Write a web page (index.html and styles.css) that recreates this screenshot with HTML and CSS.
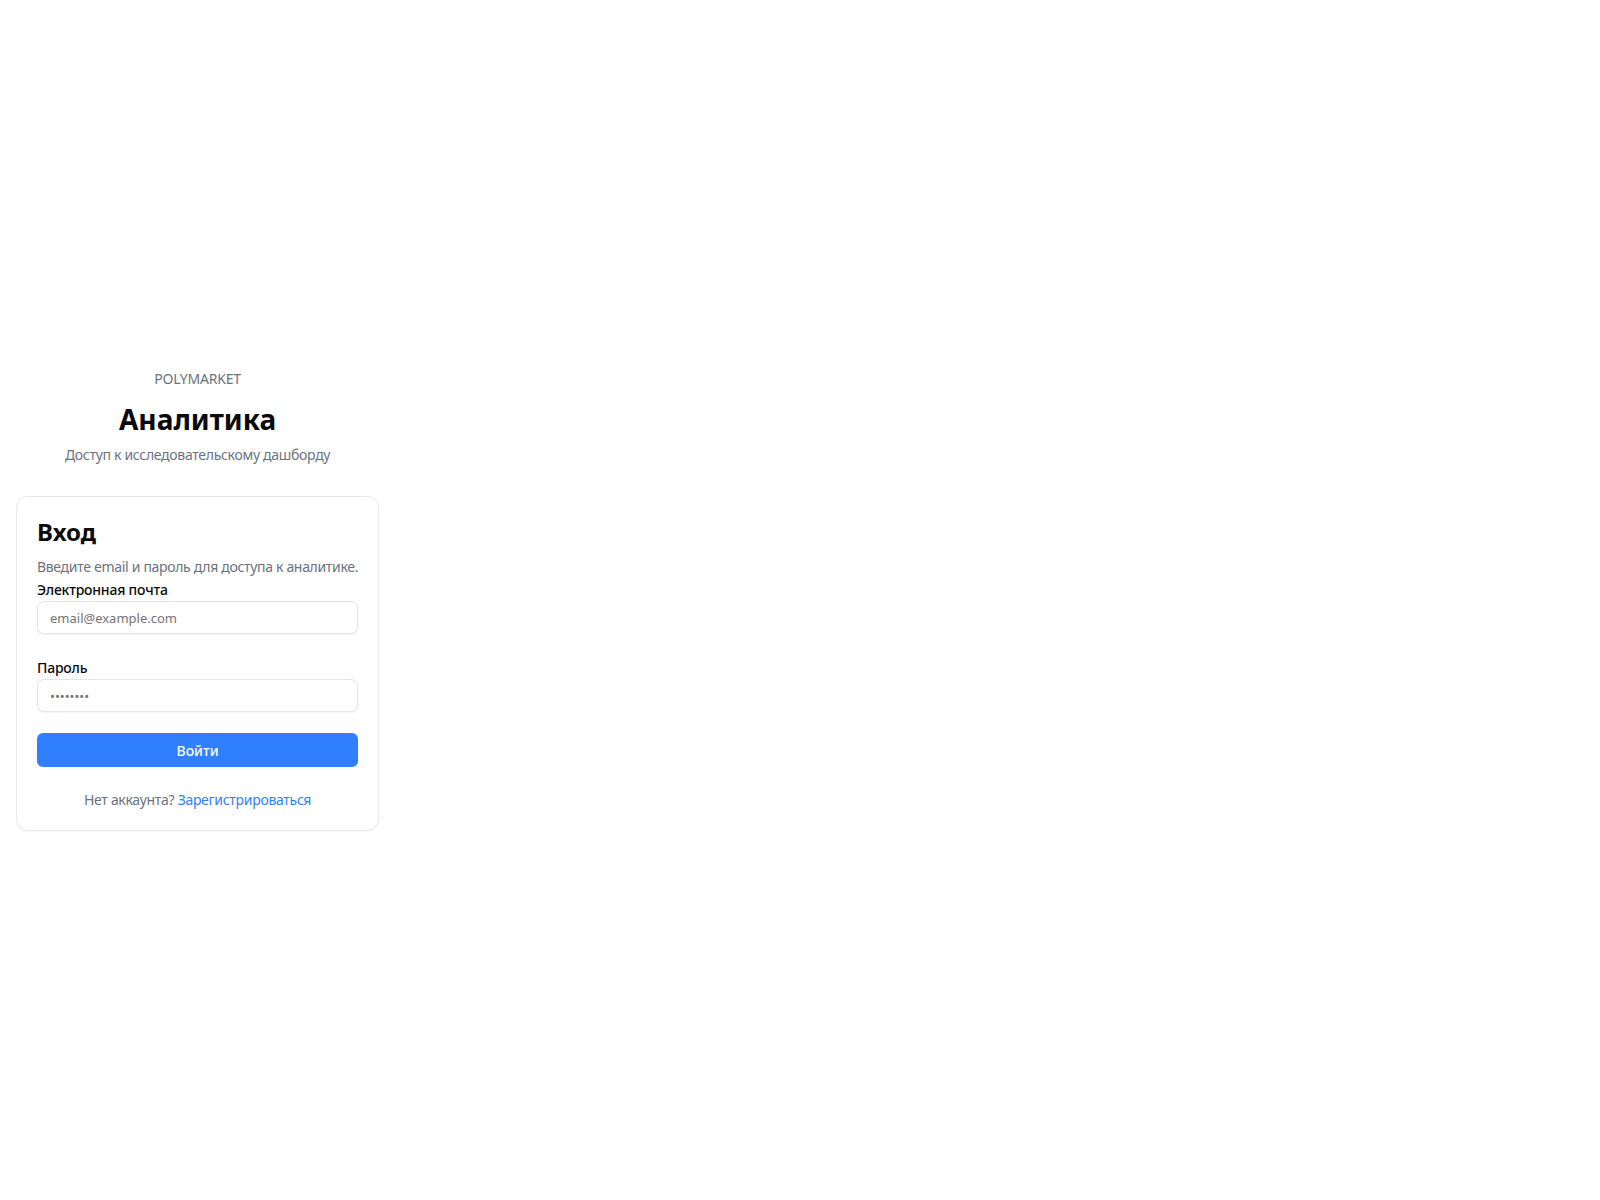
FILE: index.html
```html
<!DOCTYPE html>
<html lang="ru">
<head>
<meta charset="utf-8">
<title>Вход — Аналитика</title>
<link rel="stylesheet" href="styles.css">
</head>
<body>
<main class="page">
  <div class="wrap">
    <header class="head">
      <div class="brand">POLYMARKET</div>
      <h1 class="title">Аналитика</h1>
      <p class="subtitle">Доступ к исследовательскому дашборду</p>
    </header>
    <section class="card">
      <h2 class="card-title">Вход</h2>
      <p class="card-desc">Введите email и пароль для доступа к аналитике.</p>
      <form class="form">
        <div class="field">
          <label class="label" for="email">Электронная почта</label>
          <input class="input" id="email" type="email" placeholder="email@example.com">
        </div>
        <div class="field field-second">
          <label class="label" for="password">Пароль</label>
          <input class="input" id="password" type="password" placeholder="••••••••">
        </div>
        <button class="btn" type="button">Войти</button>
      </form>
      <p class="foot">Нет аккаунта? <a class="link" href="#">Зарегистрироваться</a></p>
    </section>
  </div>
</main>
</body>
</html>
```
FILE: styles.css
```css
* { box-sizing: border-box; }
html, body { margin: 0; padding: 0; background: #ffffff; }
body {
  font-family: "Noto Sans", "Open Sans", sans-serif;
  color: #0a0a0a;
}
.page {
  min-height: 100vh;
  display: flex;
  align-items: center;
  justify-content: flex-start;
  padding: 0 16px;
}
.wrap {
  display: flex;
  flex-direction: column;
  width: max-content;
}
.head { text-align: center; }
.brand {
  font-size: 14px;
  line-height: 20px;
  color: #6b7280;
  letter-spacing: -0.2px;
}
.title {
  margin: 12px 0 0;
  font-size: 28px;
  line-height: 36px;
  font-weight: 700;
  color: #0a0a0a;
}
.subtitle {
  margin: 8px 0 0;
  font-size: 14px;
  line-height: 20px;
  color: #6b7280;
  letter-spacing: -0.3px;
}
.card {
  margin-top: 31px;
  border: 1px solid #e8e8ea;
  border-radius: 12px;
  background: #ffffff;
  box-shadow: 0 1px 2px rgba(0,0,0,0.04);
  padding: 19px 20px 20px;
}
.card-title {
  margin: 0;
  font-size: 24px;
  line-height: 32px;
  font-weight: 700;
  color: #0a0a0a;
}
.card-desc {
  margin: 9px 0 0;
  font-size: 14px;
  line-height: 20px;
  color: #6b7280;
  letter-spacing: -0.32px;
}
.form { display: flex; flex-direction: column; }
.field { display: flex; flex-direction: column; margin-top: 3px; }
.field-second { margin-top: 24px; }
.label {
  font-size: 14px;
  line-height: 20px;
  font-weight: 500;
  color: #0a0a0a;
  letter-spacing: -0.2px;
}
.input {
  margin-top: 1px;
  height: 33px;
  width: 100%;
  border: 1px solid #e4e4e7;
  border-radius: 7px;
  padding: 0 12px;
  font-family: inherit;
  font-size: 13px;
  color: #0a0a0a;
  background: #ffffff;
  box-shadow: 0 1px 2px rgba(0,0,0,0.05);
  outline: none;
}
.input::placeholder { color: #737373; }
.btn {
  margin-top: 21px;
  height: 34px;
  width: 100%;
  border: 0;
  border-radius: 6px;
  background: #2f7fff;
  color: #ffffff;
  font-family: inherit;
  font-size: 14px;
  font-weight: 500;
  cursor: pointer;
}
.foot {
  margin: 23px 0 0;
  text-align: center;
  font-size: 14px;
  line-height: 20px;
  color: #6b7280;
  letter-spacing: -0.3px;
}
.link { color: #3080f8; text-decoration: none; }
```
